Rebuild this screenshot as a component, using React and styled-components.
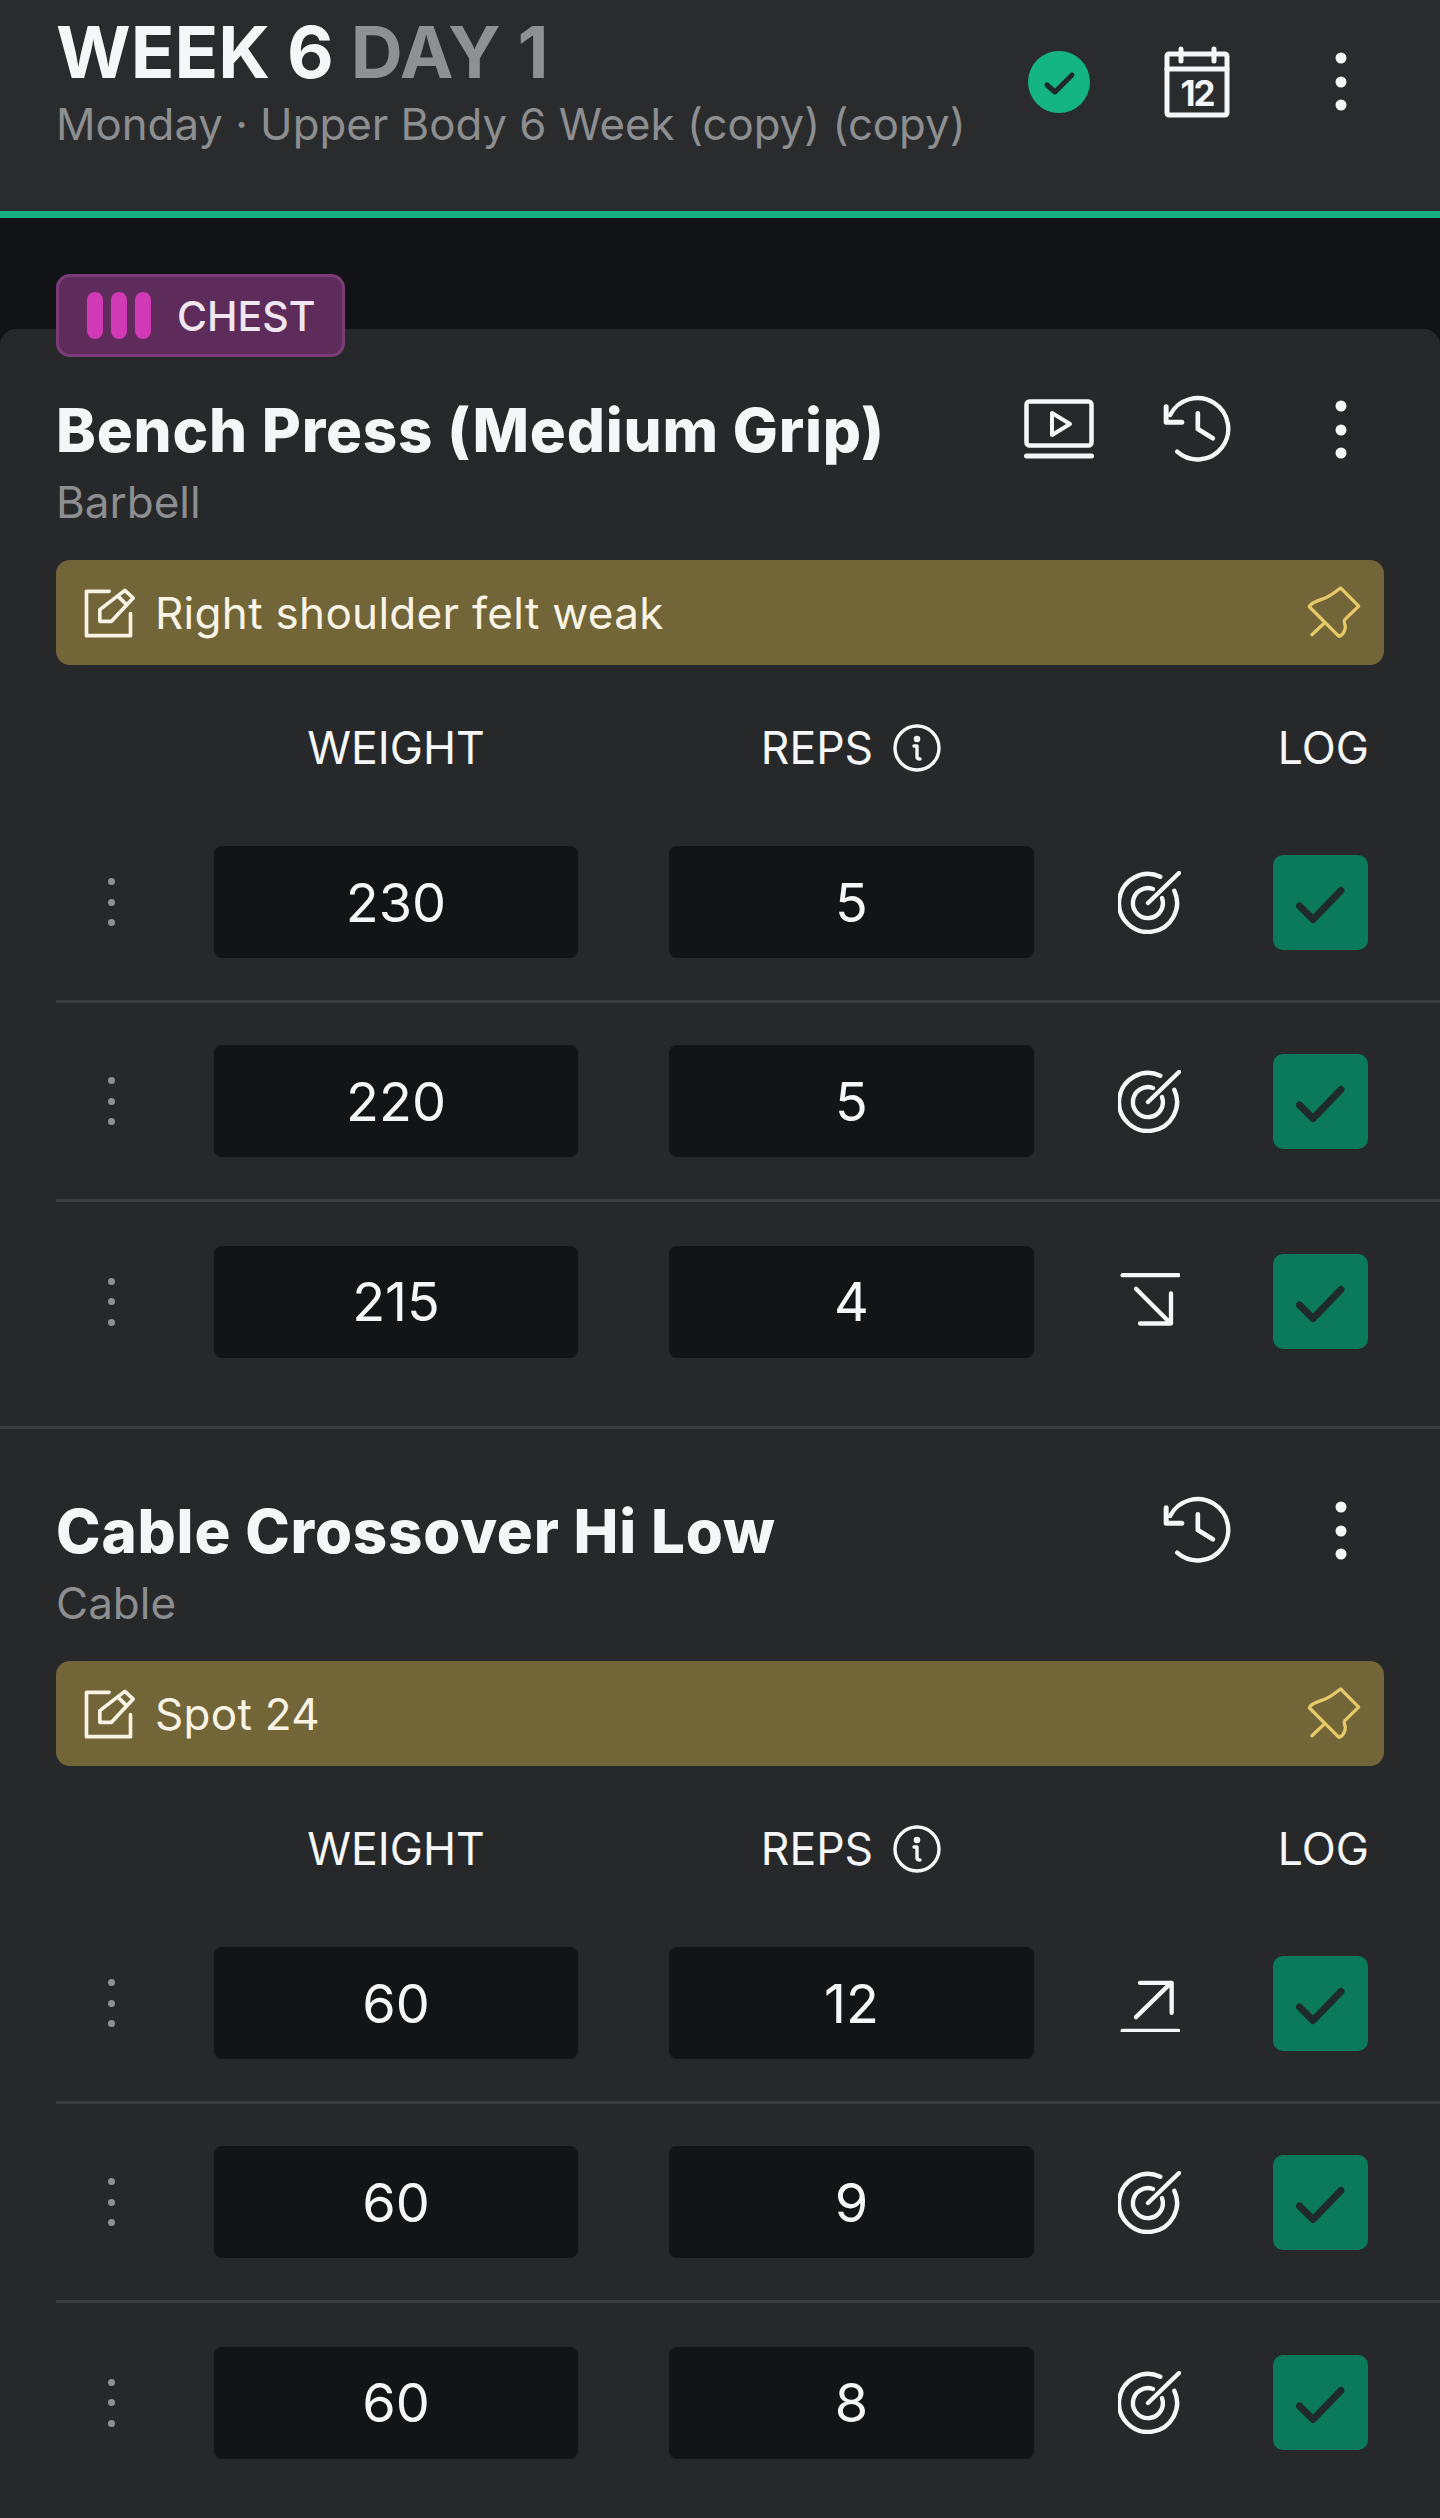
import React from "react";
import styled, { createGlobalStyle } from "styled-components";

const GlobalStyle = createGlobalStyle`
  html, body {
    margin: 0;
    padding: 0;
    background: #26282a;
  }
  * {
    box-sizing: border-box;
  }
`;

const Page = styled.div`
  width: 1440px;
  height: 2518px;
  overflow: hidden;
  background: #111315;
  font-family: Inter, "Liberation Sans", sans-serif;
  color: #f5f6f8;
`;

// Top header
const Header = styled.header`
  height: 218px;
  padding: 14px 28px 0 56px;
  display: flex;
  justify-content: space-between;
  background: #2a2b2d;
  border-bottom: 7px solid #1bb07f;
`;

const HeaderText = styled.div`
  display: flex;
  flex-direction: column;
`;

const WeekTitle = styled.h1`
  margin: 0;
  font-size: 72px;
  line-height: 76px;
  font-weight: 700;
  span {
    color: #8f9092;
  }
`;

const Subtitle = styled.div`
  font-size: 43.75px;
  line-height: 50px;
  margin-top: 10px;
  color: #8c8e90;
  white-space: nowrap;
`;

const HeaderIcons = styled.div`
  display: flex;
  margin-top: 33px;
`;

const Gap = styled.div`
  height: 111px;
`;

// Card
const Card = styled.main`
  position: relative;
  height: 2189px;
  background: #26282a;
  border-radius: 16px 16px 0 0;
`;

const Badge = styled.div`
  position: absolute;
  left: 56px;
  top: -55px;
  width: 289px;
  height: 83px;
  display: flex;
  align-items: center;
  gap: 26px;
  padding-left: 28px;
  background: #5e2c5a;
  border: 3px solid #7c3c78;
  border-radius: 14px;
  font-size: 41px;
  font-weight: 500;
  color: #efe6f0;
`;

const Bars = styled.div`
  display: flex;
  gap: 8px;
`;

const Bar = styled.span`
  width: 16px;
  height: 47px;
  border-radius: 8px;
  background: #d239b6;
`;

const Section = styled.section`
  height: ${({ $height }) => $height}px;
  padding: ${({ $top }) => $top}px 0 0 56px;
  border-bottom: ${({ $last }) => ($last ? "0" : "3px solid #3a3c3f")};
`;

const TitleRow = styled.div`
  display: flex;
  justify-content: space-between;
  align-items: flex-start;
  padding-right: 28px;
`;

const ExerciseTitle = styled.h2`
  margin: 0;
  font-size: 60px;
  line-height: 70px;
  font-weight: 800;
  letter-spacing: 0.8px;
  white-space: nowrap;
  color: #f5f6f8;
`;

const Equipment = styled.div`
  font-size: 44px;
  line-height: 50px;
  margin-top: 12px;
  color: #8c8e90;
`;

const IconBar = styled.div`
  display: flex;
`;

const IconButton = styled.div`
  width: ${({ $width }) => $width}px;
  height: 70px;
  display: flex;
  align-items: center;
  justify-content: center;
  color: #f5f6f8;
`;

const Note = styled.div`
  margin-top: 33px;
  margin-right: 56px;
  height: 105px;
  display: flex;
  align-items: center;
  padding: 0 22px 0 27px;
  background: #726538;
  border-radius: 14px;
  color: #f8f3e4;
  font-size: 44px;
`;

const NoteText = styled.span`
  flex: 1;
  margin-left: 20px;
  letter-spacing: 0.3px;
`;

const TableHead = styled.div`
  display: flex;
  align-items: center;
  height: 60px;
  margin-top: 53px;
  margin-bottom: 26px;
  padding-right: 71px;
  font-size: 44.5px;
  color: #f5f6f8;
`;

const HeadCell = styled.div`
  width: 364px;
  margin-left: ${({ $offset }) => $offset || 0}px;
  display: flex;
  justify-content: center;
  align-items: center;
  gap: 20px;
`;

const LogHead = styled.div`
  margin-left: auto;
`;

const Row = styled.div`
  display: flex;
  align-items: center;
  height: 199px;
  padding: 0 72px 0 0;
  border-bottom: ${({ $last }) => ($last ? "0" : "3px solid #3a3c3f")};
`;

const Grip = styled.div`
  width: 110px;
  margin-right: 48px;
  display: flex;
  flex-direction: column;
  align-items: center;
  gap: 13.5px;
`;

const GripDot = styled.span`
  width: 7px;
  height: 7px;
  border-radius: 50%;
  background: #8f9091;
`;

const Field = styled.div`
  width: ${({ $width }) => $width}px;
  height: 112px;
  margin-left: ${({ $offset }) => $offset || 0}px;
  display: flex;
  align-items: center;
  justify-content: center;
  background: #131416;
  border-radius: 8px;
  font-size: 54px;
  color: #f5f6f8;
`;

const Status = styled.div`
  flex: 1;
  padding-right: 8px;
  display: flex;
  justify-content: center;
  color: #f5f6f8;
`;

const LogButton = styled.div`
  width: 95px;
  height: 95px;
  background: #0a7a5a;
  border-radius: 10px;
`;

const Svg = styled.svg`
  display: block;
  fill: none;
  stroke: currentColor;
  stroke-linecap: round;
  stroke-linejoin: round;
`;

const Kebab = () => (
  <Svg width="12" height="60" viewBox="0 0 12 60" style={{ stroke: "none", fill: "currentColor" }}>
    <circle cx="6" cy="6" r="5.5" />
    <circle cx="6" cy="30" r="5.5" />
    <circle cx="6" cy="53" r="5.5" />
  </Svg>
);

const DoneBadge = () => (
  <Svg width="62" height="62" viewBox="0 0 62 62">
    <circle cx="31" cy="31" r="31" fill="#14b583" stroke="none" />
    <path d="M19 34l8 7 17-17" stroke="#1f2a28" strokeWidth="5" />
  </Svg>
);

const CalendarIcon = () => (
  <Svg width="66" height="72" viewBox="0 0 66 72" strokeWidth="5">
    <rect x="3" y="8" width="60" height="61" rx="2" />
    <path d="M3 23h60M17 3v12M50 3v12" />
    <text x="33" y="60" textAnchor="middle" fontFamily="Inter, sans-serif" fontWeight="700" fontSize="35" letterSpacing="-2" fill="currentColor" stroke="none">12</text>
  </Svg>
);

const VideoIcon = () => (
  <Svg width="70" height="62" viewBox="0 0 70 62" strokeWidth="4.5">
    <rect x="2.5" y="2.5" width="65" height="44" rx="3" />
    <path d="M2.5 57h65" strokeWidth="5" />
    <path d="M28 14v22l18-11z" strokeWidth="4" />
  </Svg>
);

const HistoryIcon = () => (
  <Svg width="72" height="70" viewBox="0 0 215 210">
    <path d="M48 170a92 92 0 1 0-21-110" strokeWidth="13" />
    <path d="M15 35v47h47" strokeWidth="15" />
    <path d="M110 55v47l45 28" strokeWidth="14" />
  </Svg>
);

const PinIcon = () => (
  <Svg width="56" height="55" viewBox="0 0 170 165" strokeWidth="10" style={{ color: "#e6c968" }}>
    <path d="M105 8l55 55-43 42c-6 8 6 14 2 26-2 9-9 21-19 24L10 65c6-14 30-20 45-25 18-6 34-20 50-32z" />
    <path d="M55 115l-37 35" />
  </Svg>
);

const EditIcon = () => (
  <Svg width="52" height="50" viewBox="0 0 155 150" strokeWidth="11">
    <path d="M78 10H10v133h132V77" />
    <path d="M125 7l25 23-65 70H50V65z" />
    <path d="M105 25l25 25" />
  </Svg>
);

const InfoIcon = () => (
  <Svg width="48" height="48" viewBox="0 0 48 48" strokeWidth="3.4">
    <circle cx="24" cy="24" r="22" />
    <path d="M21 22h3v11q0 2 3 2" />
    <circle cx="24" cy="15" r="1.6" fill="currentColor" />
  </Svg>
);

const TargetIcon = () => (
  <Svg width="63" height="63" viewBox="0 0 63 63" strokeWidth="4.4">
    <path d="M42.3 5.7a29 29 0 1 0 14 14" />
    <path d="M35 18a15 15 0 1 0 9 9" />
    <path d="M30 32L61 2" />
  </Svg>
);

const ArrowDownIcon = () => (
  <Svg width="60" height="57" viewBox="0 6 180 170" strokeWidth="13">
    <path d="M8 12h167" />
    <path d="M48 53l102 102M60 157h93V67" />
  </Svg>
);

const ArrowUpIcon = () => (
  <Svg width="60" height="57" viewBox="0 -9 180 170" strokeWidth="13">
    <path d="M8 158h167" />
    <path d="M48 117L153 14M60 14h95v90" />
  </Svg>
);

const CheckMark = () => (
  <Svg width="95" height="95" viewBox="0 0 95 95" strokeWidth="7" style={{ color: "#1f2b2a" }}>
    <path d="M26.5 51l13.5 13.5 28-29" />
  </Svg>
);

const statusIcons = {
  target: <TargetIcon />,
  down: <ArrowDownIcon />,
  up: <ArrowUpIcon />,
};

const exercises = [
  {
    title: "Bench Press (Medium Grip)",
    equipment: "Barbell",
    note: "Right shoulder felt weak",
    video: true,
    top: 66,
    height: 1100,
    sets: [
      { weight: 230, reps: 5, status: "target" },
      { weight: 220, reps: 5, status: "target" },
      { weight: 215, reps: 4, status: "down" },
    ],
  },
  {
    title: "Cable Crossover Hi Low",
    equipment: "Cable",
    note: "Spot 24",
    top: 67,
    height: 1089,
    last: true,
    sets: [
      { weight: 60, reps: 12, status: "up" },
      { weight: 60, reps: 9, status: "target" },
      { weight: 60, reps: 8, status: "target" },
    ],
  },
];

const SetRow = ({ set, last }) => (
  <Row $last={last}>
    <Grip>
      <GripDot />
      <GripDot />
      <GripDot />
    </Grip>
    <Field $width={364}>{set.weight}</Field>
    <Field $width={365} $offset={91}>{set.reps}</Field>
    <Status>{statusIcons[set.status]}</Status>
    <LogButton>
      <CheckMark />
    </LogButton>
  </Row>
);

const Exercise = ({ data }) => (
  <Section $top={data.top} $height={data.height} $last={data.last}>
    <TitleRow>
      <div>
        <ExerciseTitle>{data.title}</ExerciseTitle>
        <Equipment>{data.equipment}</Equipment>
      </div>
      <IconBar>
        {data.video && (
          <IconButton $width={130}>
            <VideoIcon />
          </IconButton>
        )}
        <IconButton $width={146}>
          <HistoryIcon />
        </IconButton>
        <IconButton $width={142}>
          <Kebab />
        </IconButton>
      </IconBar>
    </TitleRow>
    <Note>
      <EditIcon />
      <NoteText>{data.note}</NoteText>
      <PinIcon />
    </Note>
    <TableHead>
      <HeadCell $offset={158}>WEIGHT</HeadCell>
      <HeadCell $offset={91}>
        REPS
        <InfoIcon />
      </HeadCell>
      <LogHead>LOG</LogHead>
    </TableHead>
    {data.sets.map((set, i) => (
      <SetRow key={i} set={set} last={i === data.sets.length - 1} />
    ))}
  </Section>
);

const App = () => (
  <Page>
    <GlobalStyle />
    <Header>
      <HeaderText>
        <WeekTitle>
          WEEK 6 <span>DAY 1</span>
        </WeekTitle>
        <Subtitle>Monday · Upper Body 6 Week (copy) (copy)</Subtitle>
      </HeaderText>
      <HeaderIcons>
        <IconButton $width={130}>
          <DoneBadge />
        </IconButton>
        <IconButton $width={146}>
          <CalendarIcon />
        </IconButton>
        <IconButton $width={142}>
          <Kebab />
        </IconButton>
      </HeaderIcons>
    </Header>
    <Gap />
    <Card>
      <Badge>
        <Bars>
          <Bar />
          <Bar />
          <Bar />
        </Bars>
        CHEST
      </Badge>
      {exercises.map((ex) => (
        <Exercise key={ex.title} data={ex} />
      ))}
    </Card>
  </Page>
);

export default App;
